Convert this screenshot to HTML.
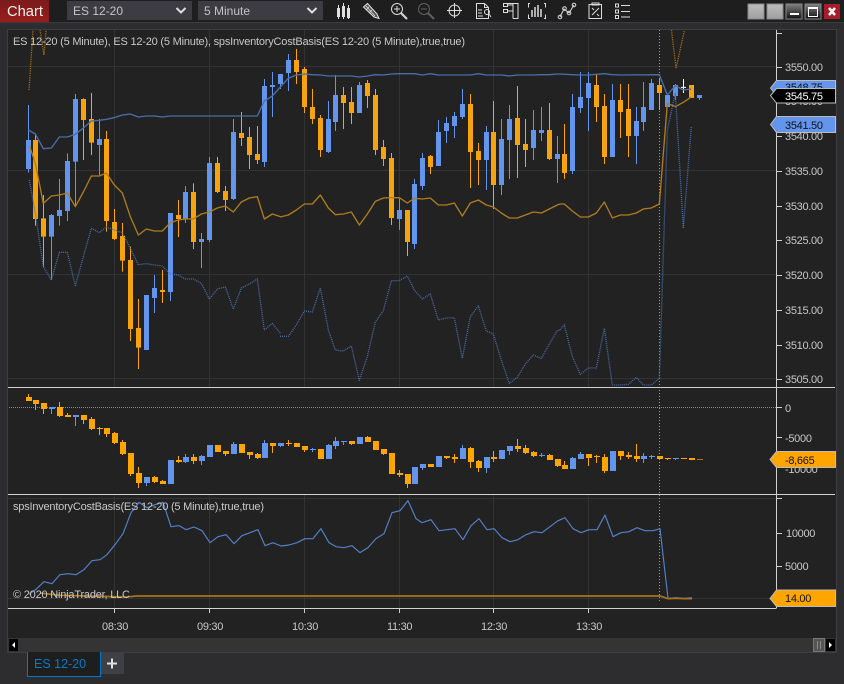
<!DOCTYPE html>
<html><head><meta charset="utf-8"><title>Chart</title>
<style>
html,body{margin:0;padding:0;background:#2d2d30;width:844px;height:684px;overflow:hidden}
svg{display:block;position:absolute;left:0;top:0}
text{font-family:"Liberation Sans",Arial,sans-serif;font-size:11px;fill:#c8c8c8}
.ax{font-size:11px;letter-spacing:-.3px}
.w{fill:none;stroke-width:3}
.ln{fill:none;stroke-width:4;stroke-linejoin:round}
.ic{fill:none;stroke:#dcdcdc;stroke-width:1}
</style></head><body>
<svg width="844" height="684" viewBox="0 0 844 684">
<defs>
<clipPath id="cm"><rect x="8" y="30" width="768" height="357"/></clipPath>
<clipPath id="cb"><rect x="8" y="495" width="768" height="113"/></clipPath>
<linearGradient id="red" x1="0" y1="0" x2="0" y2="1"><stop offset="0" stop-color="#7a1c1c"/><stop offset="1" stop-color="#991c1c"/></linearGradient>
<linearGradient id="gb" x1="0" y1="0" x2="0" y2="1"><stop offset="0" stop-color="#bcbcbc"/><stop offset="1" stop-color="#a0a0a0"/></linearGradient>
<linearGradient id="db" x1="0" y1="0" x2="0" y2="1"><stop offset="0" stop-color="#808080"/><stop offset="1" stop-color="#101010"/></linearGradient>
</defs>
<rect width="844" height="684" fill="#2d2d30"/>
<rect width="844" height="22" fill="#1e1e1e"/>
<rect y="22" width="844" height="1" fill="#3c3c3c"/>
<rect width="49" height="22" fill="url(#red)"/>
<text x="7" y="16" style="font-size:14.7px;fill:#f2f2f2">Chart</text>
<rect x="67" y="1" width="125" height="19" fill="#3c3c42"/>
<text x="73" y="15" style="font-size:12px;fill:#c4c4c4">ES 12-20</text>
<path d="M176.500 8l4.500 4.500 4.500-4.500" fill="none" stroke="#ddd" stroke-width="2"/>
<rect x="198" y="1" width="125" height="19" fill="#3c3c42"/>
<text x="204" y="15" style="font-size:12px;fill:#c4c4c4">5 Minute</text>
<path d="M307.500 8l4.500 4.500 4.500-4.500" fill="none" stroke="#ddd" stroke-width="2"/>
<!-- toolbar icons -->
<g fill="#e0e0e0"><rect x="337" y="8" width="3" height="9"/><rect x="338" y="5" width="1" height="14"/><rect x="342" y="6" width="3" height="11"/><rect x="343" y="3" width="1" height="16"/><rect x="347" y="8" width="3" height="10"/><rect x="348" y="5" width="1" height="14"/></g>
<path d="M363.500 7L367.500 3.500L377 14L379 18.500L374 17Z" fill="#555" stroke="#e0e0e0"/><path d="M366 6l9 10M369 7l-3 3M372 10l-3 3" stroke="#e0e0e0" fill="none" stroke-width=".8"/>
<circle cx="397" cy="9" r="5.500" class="ic"/><path d="M394 9h6M397 6v6" class="ic"/><path d="M401 13l6 6" stroke="#d0d0d0" stroke-width="2.200"/>
<g opacity=".35"><circle cx="424" cy="9" r="5.500" class="ic"/><path d="M421 9h6" class="ic"/><path d="M428 13l6 6" stroke="#d0d0d0" stroke-width="2.200"/></g>
<circle cx="454.500" cy="10.500" r="5.500" class="ic"/><path d="M447 10.500h15M454.500 3v15" class="ic"/>
<path d="M476.500 3.500h8l4 4v11h-12zM484.500 3.500v4h4M478 10h4M478 13h4M478 16h5" class="ic"/><circle cx="487" cy="12" r="2.500" class="ic"/><path d="M489 14l2 3" class="ic"/>
<path d="M504 3.500h9v15M513 3.500h5v15h-5M503.500 3.500h4v3h-4zM503.500 9.500h4v3h-4zM507 5h6M507 11h6" class="ic"/>
<path d="M530 3.500h-1.500v4M530 18.500h-1.500v-4M544 3.500h1.500v4M544 18.500h1.500v-4" class="ic"/><path d="M532 10v7M535 7v10M538 5v12M541 9v8" stroke="#dcdcdc" stroke-width="1.500"/>
<path d="M560 17l4-8 5 4 5-8" class="ic"/><circle cx="560" cy="17" r="1.800" class="ic"/><circle cx="564.500" cy="8.500" r="1.800" class="ic"/><circle cx="569" cy="13" r="1.800" class="ic"/><circle cx="574" cy="5" r="1.800" class="ic"/>
<path d="M589 4.500h12.500v14h-12.500zM592 3h7v2h-7zM592 15l7-7M592 8l2 2M597 14l2 2" class="ic"/>
<path d="M615.500 4h3v3h-3zM615.500 10h3v3h-3zM615.500 15.500h3v3h-3zM621 5.500h9M621 11.500h9M621 17h9" class="ic"/>
<!-- window buttons -->
<rect x="748" y="4" width="16" height="15" fill="url(#gb)" stroke="#888"/><rect x="767" y="4" width="16" height="15" fill="url(#gb)" stroke="#888"/>
<rect x="786" y="4" width="16" height="15" fill="url(#db)" stroke="#888"/><rect x="790" y="13" width="9" height="2" fill="#fff"/>
<rect x="805" y="4" width="16" height="15" fill="url(#db)" stroke="#888"/><rect x="808.500" y="7.500" width="9" height="9" fill="none" stroke="#fff"/><rect x="808" y="7" width="10" height="2" fill="#fff"/>
<rect x="824" y="4" width="16" height="15" fill="#a81c2c"/><path d="M829 8l6 7M835 8l-6 7" stroke="#fff" stroke-width="2.500"/>
<!-- chart area -->
<rect x="7.500" y="29.500" width="829" height="623" fill="#222" stroke="#3e3e42"/>
<path d="M114.500 30V387M209.500 30V387M304.500 30V387M399.500 30V387M493.500 30V387M588.500 30V387M114.500 495V608M209.500 495V608M304.500 495V608M399.500 495V608M493.500 495V608M588.500 495V608M8 66.500H776M8 170.500H776M8 274.500H776M8 378.500H776M8 498.500H776M8 598.500H776" stroke="#333" fill="none"/>
<path d="M9 407.500H776" stroke="#8a8a8a" stroke-dasharray="1 1"/>
<path d="M659.500 30V603" stroke="#9a9a9a" stroke-dasharray="1 2"/>
<g clip-path="url(#cm)">
<path d="M29 90L33 30M40 30L44 55L46 30M671.500 30L676 68.500L684.500 30" fill="none" stroke="#9c6c16" stroke-width="1.300" stroke-dasharray="1.300 1"/>
<!-- z3 -->
<g transform="translate(0,40) scale(.33333)">
<path class="w" stroke="#6495ED" d="M85.500 195V398M154.500 522V720M178.500 417V557M202.500 340V543M226.500 162V495M298.500 237V405M463.500 705V819M511.500 519V783M556.500 438V549M604.500 579V684M628.500 351V606M700.500 237V480M793.500 117V381M817.500 96V231M841.500 102V147"/>
<path class="w" stroke="#FFA500" d="M106.500 280V557M130.500 465V680M250.500 175V360M274.500 159V345M319.500 273V575M343.500 507V600M367.500 549V695M391.500 620V903M415.500 777V987M487.500 690V789M535.500 480V591M580.500 430V627M652.500 351V459M676.500 438V513M724.500 216V318M748.500 261V387M772.500 258V372"/>
<path fill="#6495ED" d="M78 300h15v87h-15zM147 525h15v65h-15zM171 510h15v18h-15zM195 363h15v150h-15zM219 177h15v188h-15zM291 297h15v18h-15zM432 765h15v165h-15zM456 744h15v30h-15zM504 519h15v237h-15zM549 456h15v81h-15zM597 597h15v9h-15zM621 369h15v231h-15zM693 276h15v201h-15zM786 138h15v228h-15zM810 135h15v6h-15zM834 102h15v30h-15z"/>
<path fill="#F5A30F" d="M99 300h15v237h-15zM123 535h15v55h-15zM243 177h15v63h-15zM267 237h15v71h-15zM312 297h15v246h-15zM336 546h15v51h-15zM360 588h15v74h-15zM384 660h15v207h-15zM408 864h15v59h-15zM480 750h15v6h-15zM528 525h15v12h-15zM573 456h15v150h-15zM645 369h15v87h-15zM669 453h15v27h-15zM717 279h15v15h-15zM741 291h15v54h-15zM765 342h15v18h-15z"/>
<polyline class="ln" stroke="#4a6ea8" points="85,270 106,282 130,326 154,324 178,291 202,291 226,283 250,264 274,243 298,241 319,238 343,233 367,225 391,222 415,231 439,228 463,228 487,231 511,228 772,228 793,183 817,168 841,141"/>
<polyline class="ln" stroke="#b07c1c" points="88,316 106,370 130,490 154,468 178,465 202,459 226,500 250,456 274,408 298,408 319,399 343,435 367,459 391,530 415,585 439,567 463,573 487,573 511,548 535,540 556,537 580,537 604,522 628,516 652,504 676,498 700,516 724,486 748,474 772,470 793,537 817,522 841,530"/>
<polyline class="ln" stroke="#4a6eaa" stroke-dasharray="3 3" points="88,420 106,520 130,680 154,720 178,637 202,637 226,737 250,650 274,565 298,578 319,561 343,570 367,578 391,625 415,674 439,671 463,675 487,678 511,702 535,705 556,717 580,717 604,730 628,777 652,747 676,741 700,807 724,744 748,732 772,717 793,870 817,850 841,880"/>
</g>
<!-- z4 -->
<g transform="translate(280,40) scale(.33333)">
<path class="w" stroke="#6495ED" d="M25.500 42V153M145.500 183V339M166.500 105V273M238.500 126V219M358.500 476V570M403.500 417V627M427.500 339V450M475.500 240V378M499.500 231V309M523.500 216V294M547.500 147V237M619.500 258V450M664.500 237V465M688.500 195V417M760.500 210V360M784.500 201V303M832.500 288V429"/>
<path class="w" stroke="#FFA500" d="M49.500 27V132M73.500 81V219M97.500 147V252M121.500 225V351M190.500 141V267M214.500 141V252M262.500 120V204M286.500 147V345M310.500 300V378M334.500 339V555M382.500 510V648M451.500 345V402M571.500 162V444M595.500 309V435M640.500 183V507M712.500 138V414M736.500 237V381M808.500 189V360"/>
<path fill="#6495ED" d="M18 60h15v39h-15zM138 237h15v99h-15zM159 165h15v81h-15zM231 135h15v84h-15zM351 510h15v27h-15zM396 432h15v180h-15zM420 354h15v84h-15zM468 276h15v102h-15zM492 249h15v24h-15zM516 228h15v30h-15zM540 192h15v39h-15zM612 276h15v84h-15zM657 297h15v138h-15zM681 237h15v63h-15zM753 270h15v54h-15zM777 270h15v9h-15zM825 342h15v15h-15z"/>
<path fill="#F5A30F" d="M42 60h15v36h-15zM66 87h15v114h-15zM90 201h15v36h-15zM114 234h15v96h-15zM183 165h15v24h-15zM207 186h15v33h-15zM255 129h15v39h-15zM279 165h15v165h-15zM303 321h15v36h-15zM327 354h15v180h-15zM375 510h15v96h-15zM444 348h15v33h-15zM564 192h15v144h-15zM588 333h15v27h-15zM633 276h15v159h-15zM705 234h15v81h-15zM729 312h15v18h-15zM801 270h15v87h-15z"/>
<polyline class="ln" stroke="#4a6ea8" points="1,141 25,115 49,105 73,102 97,104 121,105 145,108 166,108 190,108 214,108 238,111 262,108 286,104 310,105 334,102 358,101 382,101 403,101 427,105 451,101 475,105 499,105 523,105 547,105 571,105 595,101 619,105 640,105 664,105 688,108 712,105 736,105 760,105 784,104 808,104 832,102 840,102"/>
<polyline class="ln" stroke="#b07c1c" points="0,531 25,525 49,510 73,492 97,492 121,465 145,504 166,524 190,522 214,516 238,555 262,522 286,484 310,474 334,473 358,473 382,489 403,475 427,477 451,474 475,495 499,495 523,489 547,528 571,489 595,480 619,495 640,501 664,519 688,534 712,534 736,525 760,516 784,519 808,507 832,495 840,492"/>
<polyline class="ln" stroke="#4a6eaa" stroke-dasharray="3 3" points="0,889 25,889 49,855 73,813 97,816 121,744 145,870 166,930 190,933 214,918 238,1021 262,950 286,846 310,812 334,722 358,722 382,708 403,750 427,777 451,762 475,840 499,834 523,833 547,955 571,830 595,798 619,873 640,882 664,960 688,1030 712,1012 736,972 760,945 784,955 808,912 832,872 840,870"/>
</g>
<!-- z5 -->
<g transform="translate(560,20) scale(.33333)">
<path class="w" stroke="#6495ED" d="M37.500 222V462M61.500 156V279M85.500 156V333M157.500 192V411M229.500 261V432M250.500 186V333M274.500 177V270M322.500 222V261M346.500 192V240M418.500 225V240"/>
<path class="w" stroke="#FFA500" d="M13.500 312V477M109.500 165V306M133.500 222V432M181.500 192V354M205.500 192V411M298.500 177V270M394.500 195V234"/>
<path fill="#6495ED" d="M30 261h15v192h-15zM54 231h15v33h-15zM78 189h15v45h-15zM150 240h15v171h-15zM222 303h15v45h-15zM243 261h15v45h-15zM267 189h15v81h-15zM315 225h15v36h-15zM339 195h15v33h-15zM411 225h15v9h-15z"/>
<path fill="#F5A30F" d="M6 402h15v57h-15zM102 195h15v66h-15zM126 258h15v153h-15zM174 240h15v36h-15zM198 267h15v81h-15zM291 195h15v24h-15zM387 195h15v39h-15z"/>
<path d="M370.500 177V219M363 202h15" stroke="#fff" stroke-width="3" fill="none"/>
<polyline class="ln" stroke="#4a6ea8" points="0,162 37,164 61,165 85,165 109,163 133,161 157,164 181,165 298,164 322,225 346,197 370,210 394,207"/>
<polyline class="ln" stroke="#b07c1c" points="0,552 13,552 37,573 61,591 85,591 109,579 133,546 157,594 181,585 205,585 229,579 250,567 274,564 298,552 322,250 346,260 370,247 394,231"/>
<polyline class="ln" stroke="#4a6eaa" stroke-dasharray="3 3" points="0,930 13,915 37,1010 61,1063 85,1044 109,1044 133,925 157,1095 181,1095 205,1093 229,1072 250,1095 274,1095 298,1075 322,330 346,220 370,625 394,318"/>
</g>
</g>
<!-- osc panel -->
<g transform="translate(0,385) scale(.33333)">
<path class="w" stroke="#6495ED" d="M154.500 66V87M226.500 90V123M439.500 276V303M556.500 207V234M604.500 210V240M700.500 171V207M793.500 165V219M841.500 174V186M937.500 189V201M985.500 177V222M1006.500 156V192M1030.500 168V180"/>
<path class="w" stroke="#FFA500" d="M85.500 27V48M106.500 45V75M130.500 54V87M178.500 51V96M202.500 84V96M250.500 90V117M274.500 96V135M298.500 126V150M319.500 129V156M343.500 141V177M367.500 165V210M391.500 204V273M415.500 246V309M463.500 273V294M487.500 285V297M535.500 213V234M580.500 207V237M676.500 198V213M748.500 201V222M772.500 204V222M817.500 174V204M865.500 165V183M913.500 183V201M1054.500 168V180M1102.500 153V171M1150.500 192V210M1198.500 255V276M1222.500 267V309"/>
<path fill="#6495ED" d="M147 66h18v6h-18zM219 90h18v6h-18zM432 276h18v18h-18zM504 225h18v72h-18zM549 216h18v15h-18zM597 213h18v15h-18zM621 180h18v36h-18zM693 177h18v30h-18zM786 174h18v45h-18zM834 174h18v9h-18zM930 192h18v3h-18zM978 180h18v42h-18zM999 168h18v15h-18zM1023 168h18v3h-18zM1071 156h18v21h-18zM1236 246h18v51h-18z"/>
<path fill="#FFA500" d="M78 36h18v12h-18zM99 45h18v12h-18zM123 54h18v18h-18zM171 66h18v27h-18zM195 90h18v6h-18zM243 90h18v15h-18zM267 102h18v30h-18zM291 129h18v3h-18zM312 129h18v18h-18zM336 144h18v30h-18zM360 171h18v36h-18zM384 204h18v63h-18zM408 264h18v30h-18zM456 276h18v15h-18zM480 288h18v9h-18zM528 225h18v6h-18zM573 216h18v12h-18zM645 180h18v21h-18zM669 198h18v9h-18zM717 177h18v27h-18zM741 201h18v9h-18zM765 207h18v12h-18zM810 174h18v9h-18zM858 174h18v3h-18zM882 174h18v12h-18zM906 183h18v12h-18zM954 192h18v30h-18zM1047 168h18v9h-18zM1095 156h18v15h-18zM1119 168h18v27h-18zM1143 192h18v15h-18zM1167 204h18v63h-18zM1191 264h18v6h-18zM1215 267h18v30h-18z"/>
</g>
<g transform="translate(422,385) scale(.33333)">
<path class="w" stroke="#6495ED" d="M1.500 237V255M121.500 180V222M193.500 216V264M262.500 183V210M358.500 204V216M451.500 216V252M475.500 201V222M664.500 204V234M688.500 210V222M760.500 219V225"/>
<path class="w" stroke="#FFA500" d="M73.500 213V222M97.500 207V234M145.500 186V249M169.500 225V261M214.500 198V231M286.500 162V201M310.500 180V207M334.500 198V216M382.500 207V225M406.500 222V246M427.500 228V252M499.500 207V243M523.500 210V234M547.500 207V264M595.500 198V225M619.500 201V222M643.500 177V231M712.500 213V222M736.500 219V225"/>
<path fill="#6495ED" d="M-6 237h18v12h-18zM42 213h18v33h-18zM114 189h18v33h-18zM186 216h18v33h-18zM231 195h18v27h-18zM255 183h18v15h-18zM351 210h18v3h-18zM444 219h18v33h-18zM468 207h18v15h-18zM564 198h18v60h-18zM657 213h18v9h-18zM681 213h18v3h-18zM753 219h18v3h-18z"/>
<path fill="#FFA500" d="M18 237h18v9h-18zM66 213h18v6h-18zM90 216h18v6h-18zM138 189h18v42h-18zM162 228h18v21h-18zM207 216h18v6h-18zM279 183h18v9h-18zM303 189h18v15h-18zM327 201h18v12h-18zM375 210h18v15h-18zM399 222h18v21h-18zM420 240h18v12h-18zM492 207h18v12h-18zM516 213h18v3h-18zM540 216h18v42h-18zM588 198h18v15h-18zM612 210h18v6h-18zM636 213h18v9h-18zM705 213h18v9h-18zM729 219h18v3h-18zM777 219h18v3h-18zM801 219h18v6h-18zM825 222h18v2h-18z"/>
</g>
<!-- bottom panel -->
<g clip-path="url(#cb)">
<g transform="translate(0,490) scale(.33333)">
<polyline fill="none" stroke="#a87417" stroke-width="5" points="120,309 180,316 380,321 410,318 1266,318"/>
<polyline fill="none" stroke="#5480c8" stroke-width="3.500" stroke-linejoin="round" points="87,312 108,298 132,275 156,281 180,254 204,251 228,254 252,239 276,212 300,209 321,194 345,164 369,131 393,68 417,37 441,53 465,44 489,37 513,110 537,107 558,119 582,111 606,122 630,158 654,140 678,134 702,161 726,137 750,128 774,119 795,167 819,158 843,168 867,165 891,158 915,146 939,146 963,116 987,158 1008,170 1032,173 1056,167 1080,188 1104,173 1128,146 1152,131 1176,68 1200,62 1224,32 1248,86 1266,98"/>
</g>
<g transform="translate(422,490) scale(.33333)">
<polyline fill="none" stroke="#5480c8" stroke-width="3.500" stroke-linejoin="round" points="0,98 27,89 51,122 75,119 99,116 123,149 147,107 171,86 195,119 216,116 240,143 264,155 288,149 312,134 336,125 360,128 384,110 408,92 429,83 453,116 477,128 501,119 525,119 549,75 573,140 597,128 621,125 645,113 669,122 693,122 714,116 738,325 762,323 786,325 810,323"/>
<polyline fill="none" stroke="#a87417" stroke-width="5" points="-1,318 714,318 738,326 762,325 786,326 810,326"/>
</g>
</g>
<!-- panel & axis lines -->
<path d="M8 387.500H835M8 494.500H835M8 608.500H776.500M776.500 30V608" stroke="#d0d0d0" fill="none"/>
<path d="M776 33.500h6M776 67.500h6M776 136.500h6M776 171.500h6M776 206.500h6M776 240.500h6M776 275.500h6M776 310.500h6M776 345.500h6M776 379.500h6M776 407.500h6M776 437.500h6M776 498.500h6M776 533.500h6M776 566.500h6M114.500 608v5M209.500 608v5M304.500 608v5M399.500 608v5M493.500 608v5M588.500 608v5" stroke="#d0d0d0" fill="none"/>
<!-- legend -->
<text x="13" y="45" textLength="452" lengthAdjust="spacing">ES 12-20 (5 Minute), ES 12-20 (5 Minute), spsInventoryCostBasis(ES 12-20 (5 Minute),true,true)</text>
<text x="13" y="510" textLength="251" lengthAdjust="spacing">spsInventoryCostBasis(ES 12-20 (5 Minute),true,true)</text>
<text x="13" y="598" textLength="117" lengthAdjust="spacing">© 2020 NinjaTrader, LLC</text>
<!-- axis labels -->
<g>
<text class="ax" x="785" y="71">3550.00</text>
<text class="ax" x="785" y="105">3545.00</text>
<text class="ax" x="785" y="140">3540.00</text>
<text class="ax" x="785" y="175">3535.00</text>
<text class="ax" x="785" y="210">3530.00</text>
<text class="ax" x="785" y="244">3525.00</text>
<text class="ax" x="785" y="279">3520.00</text>
<text class="ax" x="785" y="314">3515.00</text>
<text class="ax" x="785" y="349">3510.00</text>
<text class="ax" x="785" y="383">3505.00</text>
<text class="ax" x="785" y="412">0</text>
<text class="ax" x="785" y="442">-5000</text>
<text class="ax" x="785" y="473">-10000</text>
<text class="ax" x="786" y="537">10000</text>
<text class="ax" x="785" y="570">5000</text>
</g>
<!-- markers -->
<polygon points="770.500,88 776.500,80.500 835.500,80.500 835.500,96 776.500,96" fill="#6495ED" stroke="#bbb"/>
<text class="ax" x="785" y="91" style="fill:#111">3548.75</text>
<polygon points="770.500,95.500 776.500,88.500 835.500,88.500 835.500,103 776.500,103" fill="#000" stroke="#bbb"/>
<text class="ax" x="785" y="100" style="fill:#fff">3545.75</text>
<polygon points="770.500,124.500 776.500,116.500 835.500,116.500 835.500,132.500 776.500,132.500" fill="#6495ED" stroke="#bbb"/>
<text class="ax" x="785" y="129" style="fill:#111">3541.50</text>
<polygon points="770,459.500 776.500,451.500 835.500,451.500 835.500,467.500 776.500,467.500" fill="#FFA500" stroke="#bbb"/>
<text class="ax" x="785" y="464" style="fill:#111">-8,665</text>
<polygon points="770,598.500 776.500,590 835.500,590 835.500,606.500 776.500,606.500" fill="#FFA500" stroke="#bbb"/>
<text class="ax" x="785" y="602" style="fill:#111">14.00</text>
<!-- time labels -->
<text class="ax" x="102" y="630">08:30</text>
<text class="ax" x="197" y="630">09:30</text>
<text class="ax" x="292" y="630">10:30</text>
<text class="ax" x="387" y="630">11:30</text>
<text class="ax" x="481" y="630">12:30</text>
<text class="ax" x="576" y="630">13:30</text>
<!-- scrollbar -->
<rect x="8" y="638" width="828" height="14" fill="#343434"/>
<rect x="9" y="639" width="9" height="12" fill="#000"/>
<path d="M12 645l3-3v6z" fill="#fff"/>
<rect x="813.500" y="638.500" width="11" height="13" fill="#555" stroke="#777"/>
<path d="M817.500 641v8M820.500 641v8" stroke="#888"/>
<rect x="826" y="639" width="9" height="12" fill="#000"/>
<path d="M832 645l-3-3v6z" fill="#fff"/>
<!-- tabs -->
<path d="M27.500 652V676.500H100.500V652" fill="#1e1e1e" stroke="#007acc"/>
<text x="34" y="668" style="font-size:12.500px;fill:#0a7ac8">ES 12-20</text>
<rect x="101" y="653" width="23" height="21" fill="#3f3f46"/>
<path d="M107 663.500h10M112 658.500v10" stroke="#e0e0e0" stroke-width="2"/>
</svg>
</body></html>
